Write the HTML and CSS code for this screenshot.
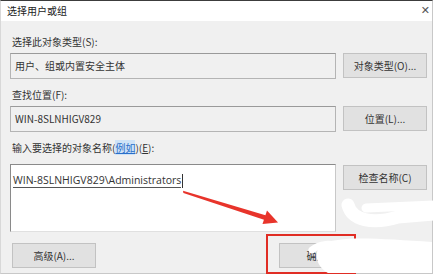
FILE: index.html
```html
<!DOCTYPE html>
<html>
	<head>
		<meta charset="UTF-8">
		<title>选择用户或组</title>
		<link rel="stylesheet" href="styles.css">
	</head>
	<body>
		<div class="dialog">
			<div class="titlebar">
				<span class="title">选择用户或组</span>
				<span class="close">✕</span>
			</div>
			<div class="content">
				<div class="label">选择此对象类型(S):</div>
				<div class="row">
					<div class="field">用户、组或内置安全主体</div>
					<div class="btn">对象类型(O)...</div>
				</div>
				<div class="label">查找位置(F):</div>
				<div class="row">
					<div class="field">WIN-8SLNHIGV829</div>
					<div class="btn">位置(L)...</div>
				</div>
				<div class="label last">输入要选择的对象名称(<span class="link">例如</span>)(<u>E</u>):</div>
				<div class="row">
					<div class="field area"><span class="name">WIN-8SLNHIGV829\Administrators</span><span class="caret"></span></div>
					<div class="btn check">检查名称(C)</div>
				</div>
				<div class="footer">
					<div class="btn">高级(A)...</div>
					<div class="spacer"></div>
					<div class="btn ok">确定</div>
					<div class="btn cancel">取消</div>
				</div>
			</div>
			<div class="mark"></div>
			<svg class="overlay" width="434" height="274" viewBox="0 0 434 274">
				<!-- 箭头 -->
				<polygon fill="#e8342b" points="183,190.8 183.4,193 265.5,220.2 266.3,215.6"/>
				<polygon fill="#e8342b" points="278,222.5 262.5,224 267,210.5"/>
				<!-- 涂白 -->
				<path d="M348 205 C352 220, 372 225, 398 217 L434 214" stroke="#fff" stroke-width="13" fill="none" stroke-linecap="round"/>
				<path d="M366 208 L434 205" stroke="#fff" stroke-width="9" fill="none" stroke-linecap="round"/>
				<path d="M320 245 C340 235, 380 239, 432 242 L432 273 L328 273 C316 266, 314 254, 320 245 Z" fill="#fff"/>
				<path d="M312 250 C320 243, 332 243, 338 247" stroke="#fff" stroke-width="7" fill="none" stroke-linecap="round"/>
			</svg>
		</div>
	</body>
</html>
```

FILE: styles.css
```css
* {margin:0; padding:0; box-sizing:border-box;}
body {width:434px; height:274px; overflow:hidden; background:#fff; font-family:"Noto Sans CJK SC","Liberation Sans",sans-serif; font-size:10px; color:#333;}

.dialog {width:433px; height:274px; position:relative; background:#f0f0f0; border-top:1px solid #3c3c3c; border-left:1px solid #d8d8d8; border-right:1px solid #c8c8c8; border-bottom:1px solid #c8c8c8;}
.titlebar {height:20px; background:#fff; display:flex; align-items:center; justify-content:space-between; padding:0 2px 2px 6px;}
.title {color:#222;}
.close {font-size:11px; color:#555; font-family:"DejaVu Sans",sans-serif;}

.content {padding:5px 5px 0 9px;}
.label {height:16px; line-height:16px; margin:8px 0 3px; padding-left:2px;}
.label.last {margin-bottom:8px;}
.link {color:#2a6fc9; background:#cfe3f7; text-decoration:underline;}

.row {display:flex; gap:7px; align-items:flex-start;}
.field {width:326px; height:26px; line-height:24px; padding-left:4px; border:1px solid #b4b4b4; border-top-color:#9a9a9a; background:#f0f0f0; color:#333;}
.field.area {height:68px; background:#fff; border:1px solid #8a8a8a; border-right-color:#c8c8c8; border-bottom-color:#e0e0e0; padding:6px 0 0 2px; line-height:18px; font-family:"Open Sans","Liberation Sans",sans-serif; font-size:10.5px;}
.name {border-bottom:1px solid #555; color:#333;}
.caret {display:inline-block; width:1px; height:14px; background:#333; vertical-align:middle; margin-left:1px;}

.btn {width:84px; height:25px; line-height:23px; text-align:center; background:#e1e1e1; border:1px solid #c2c2c2; color:#333; flex:none;}
.btn.check {margin-top:1px;}

.footer {display:flex; margin-top:11px; padding-left:2px;}
.spacer {flex:1;}
.btn.ok {width:75px;}
.btn.cancel {width:67px; margin-left:6px;}

.mark {position:absolute; left:265px; top:233px; width:90px; height:40px; border:2px solid #e02d24;}
.overlay {position:absolute; left:-1px; top:-1px;}
```
